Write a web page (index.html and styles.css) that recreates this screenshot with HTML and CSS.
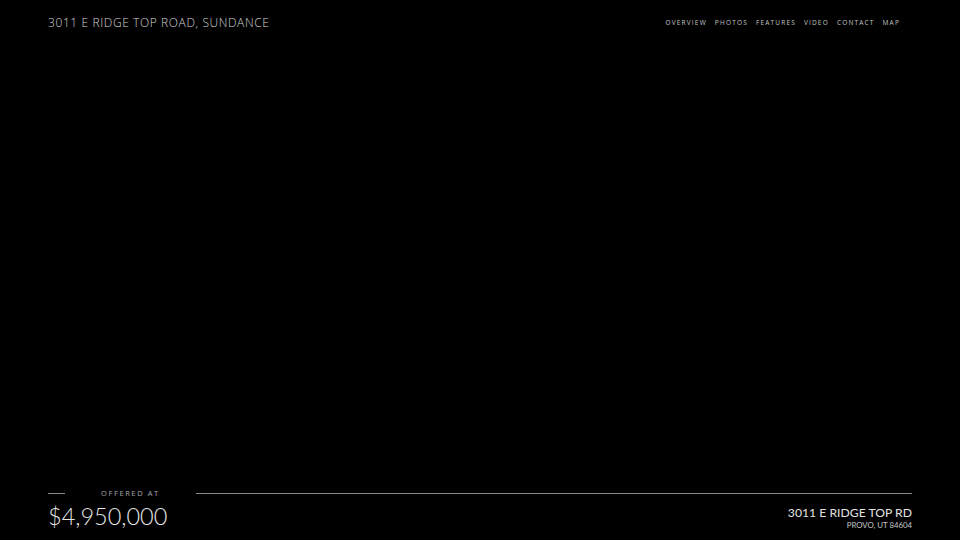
FILE: index.html
```html
<!DOCTYPE html>
<html>
<head>
<meta charset="utf-8">
<link rel="stylesheet" href="styles.css">
</head>
<body>
<div class="page">
  <header class="top">
    <div class="title">3011 E RIDGE TOP ROAD, SUNDANCE</div>
    <nav class="nav">
      <span>OVERVIEW</span>
      <span>PHOTOS</span>
      <span>FEATURES</span>
      <span>VIDEO</span>
      <span>CONTACT</span>
      <span>MAP</span>
    </nav>
  </header>
  <main class="hero"></main>
  <footer class="bottom">
    <div class="rule-row">
      <span class="rule short"></span>
      <span class="label">OFFERED AT</span>
      <span class="rule long"></span>
    </div>
    <div class="info-row">
      <div class="price">$4,950,000</div>
      <div class="addr">
        <div class="street">3011 E RIDGE TOP RD</div>
        <div class="city">PROVO, UT 84604</div>
      </div>
    </div>
  </footer>
</div>
</body>
</html>
```
FILE: styles.css
```css
* { box-sizing: border-box; }
html, body { margin: 0; padding: 0; background: #000; }
.page {
  width: 960px;
  height: 540px;
  display: flex;
  flex-direction: column;
  background: #000;
  color: #ddd;
  overflow: hidden;
}
.top {
  display: flex;
  justify-content: space-between;
  align-items: center;
  padding: 14px 60px 0 48px;
  height: 30px;
}
.title {
  font-family: "Open Sans", sans-serif;
  font-size: 12px;
  letter-spacing: 0.6px;
  color: #d2d2d2;
  font-weight: 300;
}
.nav {
  display: flex;
  gap: 8px;
  font-family: "Open Sans", sans-serif;
  font-size: 6.5px;
  letter-spacing: 1.18px;
  color: #c4c4c4;
}
.hero { flex: 1; }
.bottom {
  padding: 0 48px 9px 48px;
}
.rule-row {
  display: flex;
  align-items: center;
  height: 10px;
}
.rule {
  height: 1px;
  background: #8a8a8a;
}
.rule.short { width: 17px; }
.rule.long { flex: 1; }
.label {
  font-family: "Open Sans", sans-serif;
  font-size: 7.5px;
  letter-spacing: 1.6px;
  color: #a8a8a8;
  margin: 0 36px 0 36px;
}
.info-row {
  display: flex;
  justify-content: space-between;
  align-items: flex-start;
  margin-top: 3px;
}
.price {
  font-family: Lato, sans-serif;
  font-weight: 300;
  font-size: 23.5px;
  color: #e6e6e6;
  line-height: 30px;
}
.addr {
  text-align: right;
  font-family: Lato, sans-serif;
  color: #e0e0e0;
  padding-top: 5px;
}
.street {
  font-size: 12.2px;
  line-height: 14px;
}
.city {
  font-size: 7.8px;
  line-height: 11px;
  color: #c8c8c8;
}
```
